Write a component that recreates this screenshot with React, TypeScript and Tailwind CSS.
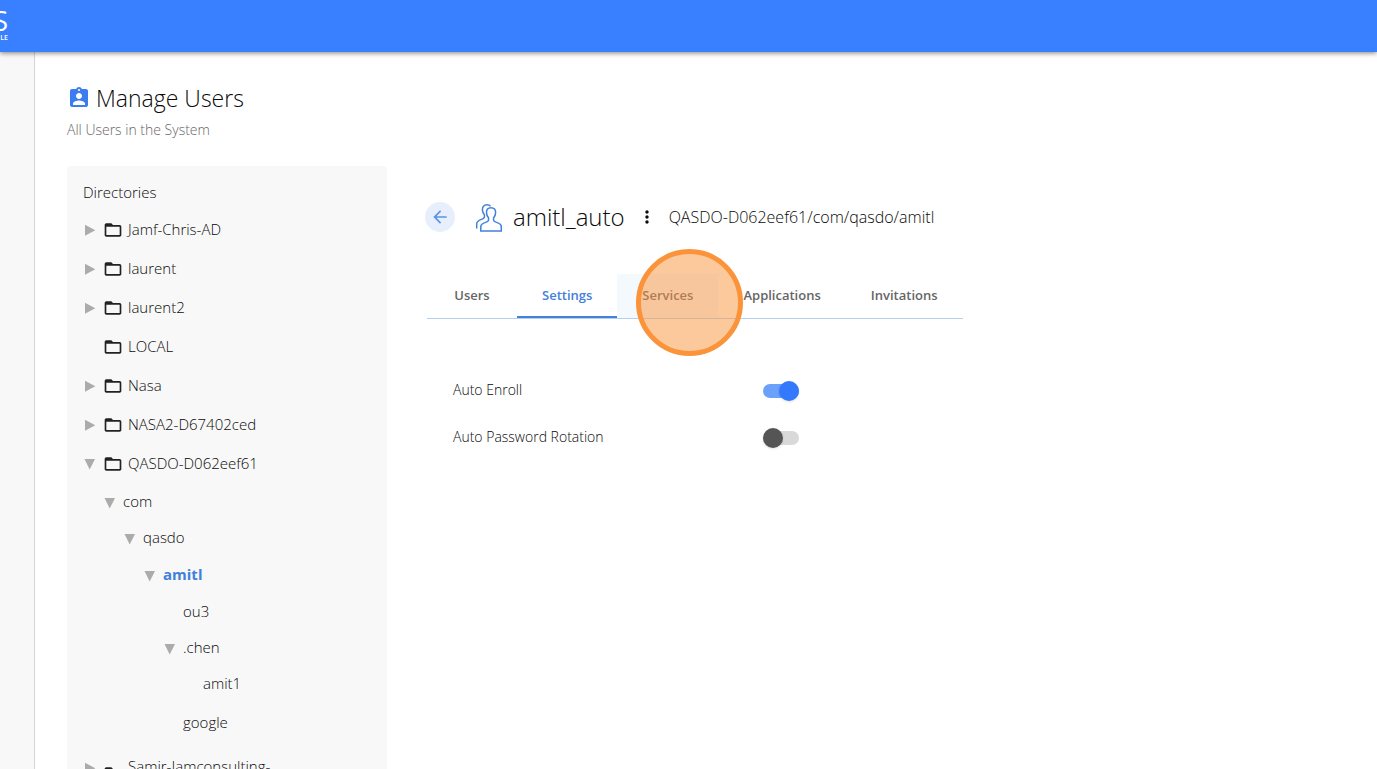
import { useState } from 'react';
import { MdArrowBack, MdAssignmentInd, MdFolderOpen, MdMoreVert } from 'react-icons/md';

type DirNode = {
  name: string;
  open?: boolean;
  leaf?: boolean;
  tall?: boolean;
  children?: DirNode[];
};

const directories: DirNode[] = [
  { name: 'Jamf-Chris-AD' },
  { name: 'laurent' },
  { name: 'laurent2' },
  { name: 'LOCAL', leaf: true },
  { name: 'Nasa' },
  { name: 'NASA2-D67402ced' },
  {
    name: 'QASDO-D062eef61',
    open: true,
    children: [
      {
        name: 'com',
        open: true,
        children: [
          {
            name: 'qasdo',
            open: true,
            children: [
              {
                name: 'amitl',
                open: true,
                children: [
                  { name: 'ou3', leaf: true },
                  { name: '.chen', open: true, children: [{ name: 'amit1', leaf: true }] },
                  { name: 'google', leaf: true },
                ],
              },
            ],
          },
        ],
      },
    ],
  },
  { name: 'Samir-Iamconsulting-', tall: true },
];

const tabs = ['Users', 'Settings', 'Services', 'Applications', 'Invitations'];

function Caret({ open }: { open?: boolean }) {
  return (
    <svg width="12" height="12" viewBox="0 0 12 12" className="fill-[#ababab]">
      <path d={open ? 'M.5 1h10.500L5.700 11.500z' : 'M1 .800v11l10.300-5.500z'} />
    </svg>
  );
}

function UsersIcon() {
  return (
    <svg width="30" height="30" viewBox="0 0 30 30" className="fill-none stroke-[#4280dc] stroke-[1.5]">
      <path d="M16 5.7c-3.200 0-4.600 2-4.500 4.900.1 2.200.8 4 2 5.200v2.600c-.3 1-1.300 1.500-3 2-3 .9-4.600 1.800-4.700 4.200V29h20.500v-4.400c-.1-2.400-1.700-3.300-4.700-4.200-1.700-.5-2.700-1-3-2v-2.600c1.200-1.200 1.900-3 2-5.200.1-2.900-1.400-4.900-4.600-4.900z" />
      <path d="M15.500 4.200C14.700 3.200 13.500 2.800 12 2.800c-3.200 0-4.700 2-4.600 4.900.1 2.200.8 3.900 2 5.100v2.400c-.3 1-1.300 1.600-3 2.200-2.900 1-4.600 2-4.700 4.400v4.800" />
    </svg>
  );
}

function TreeItem({ node, root }: { node: DirNode; root?: boolean }) {
  const [open, setOpen] = useState(!!node.open);
  const selected = node.name === 'amitl';

  let height = root ? 'h-[39px]' : 'h-9';
  if (selected) height = 'h-[38px]';
  if (node.tall) height = 'h-11';

  return (
    <li>
      <div className={`flex items-center ${height}`}>
        <span className={`flex w-5 shrink-0 pl-px ${root ? '' : 'pt-1'} ${node.tall ? 'pb-3' : ''}`}>
          {!node.leaf && (
            <button onClick={() => setOpen(!open)} aria-label={`Toggle ${node.name}`}>
              <Caret open={open} />
            </button>
          )}
        </span>
        {root && <MdFolderOpen size={20} className="mr-[5px] shrink-0 text-[#222]" />}
        <a href="#" className={`${selected ? 'font-bold text-[#4280dc]' : ''} ${node.tall ? 'pb-4' : ''}`}>
          {node.name}
        </a>
      </div>
      {open && node.children && (
        <ul className="pb-[3px] pl-5">
          {node.children.map((child) => (
            <TreeItem key={child.name} node={child} />
          ))}
        </ul>
      )}
    </li>
  );
}

function Toggle({ label, id, initial }: { label: string; id: string; initial: boolean }) {
  const [on, setOn] = useState(initial);

  return (
    <div className="flex h-[47px] items-center">
      <label htmlFor={id} className="w-[310px] pb-0.5 text-[14px]">{label}</label>
      <span className="relative flex h-5 w-9 items-center">
        <input
          id={id}
          type="checkbox"
          role="switch"
          checked={on}
          onChange={() => setOn(!on)}
          className="peer h-[14px] w-9 cursor-pointer appearance-none rounded-full bg-[#d9d9d9] checked:bg-[#6ba1fa]"
        />
        <span className="pointer-events-none absolute left-0 size-5 rounded-full bg-[#555] shadow-sm peer-checked:left-4 peer-checked:bg-[#3379fd]" />
      </span>
    </div>
  );
}

export default function App() {
  const [active, setActive] = useState('Settings');

  return (
    <div className="flex h-screen flex-col overflow-hidden bg-white font-['Open_Sans','Noto_Sans',sans-serif] font-light text-[#0a0a0a]">
      <header className="z-10 flex h-[52px] shrink-0 items-center bg-[#3880ff] text-white shadow-[0_1px_5px_rgba(0,0,0,0.5)]">
        <div className="flex w-2 flex-col items-end">
          <span className="text-[28px] leading-6 font-normal">S</span>
          <span className="text-[7px] leading-3 font-semibold">LE</span>
        </div>
      </header>

      <div className="flex min-h-0 flex-1">
        <nav className="w-[35px] shrink-0 border-r border-[#d4d4d4] bg-[#f8f8f8]" />

        <main className="min-w-0 flex-1 px-8 pt-8">
          <h1 className="flex items-center gap-[5px] text-[23px] leading-7">
            <MdAssignmentInd size={24} className="text-[#3b7cf0]" />
            Manage Users
          </h1>
          <p className="mt-2 text-[14px] leading-5 text-[#666]">All Users in the System</p>

          <div className="mt-[26px] flex items-start">
            <aside className="w-[320px] shrink-0 rounded bg-[#f8f8f8] px-4 pt-4 text-[15px]">
              <h2 className="h-[28px] leading-5">Directories</h2>
              <ul>
                {directories.map((dir) => (
                  <TreeItem key={dir.name} node={dir} root />
                ))}
              </ul>
            </aside>

            <section className="ml-10 min-w-0 flex-1 pt-9">
              <div className="flex h-[30px] items-center">
                <button aria-label="Back" className="-ml-0.5 flex size-[30px] items-center justify-center rounded-full bg-[#e8effc] text-[#5b93ea]">
                  <MdArrowBack size={20} />
                </button>
                <span className="ml-5">
                  <UsersIcon />
                </span>
                <h2 className="ml-2 text-[24px]">amitl_auto</h2>
                <button aria-label="More actions" className="mx-3">
                  <MdMoreVert size={20} />
                </button>
                <span className="text-[16px]">QASDO-D062eef61/com/qasdo/amitl</span>
              </div>

              <div className="relative mt-[42px] w-fit">
                <div role="tablist" className="flex border-b border-[#b5d0ee]">
                  {tabs.map((tab) => (
                    <button
                      key={tab}
                      role="tab"
                      aria-selected={tab === active}
                      onClick={() => setActive(tab)}
                      className={`relative h-11 min-w-[90px] px-[25px] text-[13px] font-semibold ${
                        tab === active
                          ? 'text-[#4280dc] after:absolute after:inset-x-0 after:bottom-0 after:h-0.5 after:bg-[#4280dc]'
                          : 'text-[#666]'
                      } ${tab === 'Services' ? 'bg-[#f4f9fe]' : ''}`}
                    >
                      {tab}
                    </button>
                  ))}
                </div>
                {/* click marker */}
                <span className="pointer-events-none absolute -top-[25px] left-[209px] size-[107px] rounded-full border-[5px] border-[#fa9339] bg-[#fa9339]/50" />
              </div>

              <div className="mt-12 pl-[26px]">
                <Toggle id="auto-enroll" label="Auto Enroll" initial />
                <Toggle id="auto-rotation" label="Auto Password Rotation" initial={false} />
              </div>
            </section>
          </div>
        </main>
      </div>
    </div>
  );
}
